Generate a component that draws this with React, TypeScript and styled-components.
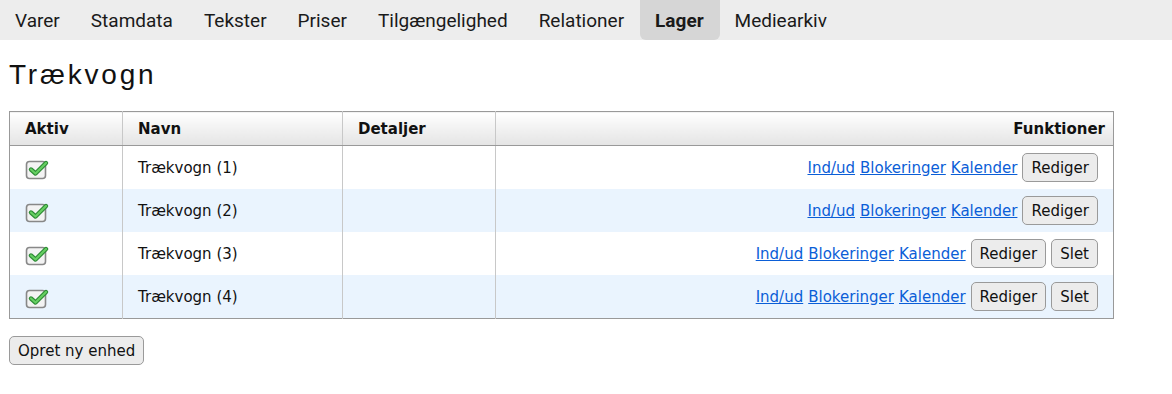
import React from "react";
import styled, { createGlobalStyle } from "styled-components";

const GlobalStyle = createGlobalStyle`
  body {
    margin: 0;
    background: #fff;
    font-family: "DejaVu Sans", Verdana, sans-serif;
  }
`;

const TabBar = styled.div`
  display: flex;
  height: 40px;
  background: #ededed;
  font-family: Roboto, "Liberation Sans", sans-serif;
`;

const Tab = styled.div<{ $active?: boolean }>`
  display: flex;
  align-items: center;
  padding: 0 16px 0 15px;
  font-size: 19px;
  color: #1a1a1a;
  font-weight: ${(p) => (p.$active ? 700 : 400)};
  background: ${(p) => (p.$active ? "#d6d6d6" : "transparent")};
  border-radius: 0 0 6px 6px;
`;

const Content = styled.div`
  padding: 0 9px;
`;

const Title = styled.h1`
  margin: 19px 0 0;
  font-family: "Liberation Sans", Arial, sans-serif;
  font-weight: 400;
  font-size: 28px;
  letter-spacing: 2.8px;
  color: #111;
  line-height: 32px;
`;

const Table = styled.table`
  margin-top: 20px;
  width: 1105px;
  table-layout: fixed;
  border-collapse: collapse;
  border: 1px solid #999;
  font-size: 15px;
  color: #111;
`;

const Col = styled.col<{ $w?: number }>`
  width: ${(p) => (p.$w ? `${p.$w}px` : "auto")};
`;

const Th = styled.th<{ $right?: boolean }>`
  height: 33px;
  padding: 0 8px 0 15px;
  text-align: ${(p) => (p.$right ? "right" : "left")};
  background: linear-gradient(#ffffff, #e4e4e4);
  border-left: 1px solid #c8c8c8;
  border-bottom: 1px solid #999;
  font-weight: 700;
  &:first-child {
    border-left: none;
  }
`;

const Tr = styled.tr<{ $alt?: boolean }>`
  background: ${(p) => (p.$alt ? "#eaf4fe" : "#fff")};
`;

const Td = styled.td<{ $right?: boolean }>`
  height: 43px;
  padding: 0 15px;
  text-align: ${(p) => (p.$right ? "right" : "left")};
  border-left: 1px solid #c8c8c8;
  &:first-child {
    border-left: none;
  }
`;

const Actions = styled.div`
  display: flex;
  justify-content: flex-end;
  align-items: center;
  gap: 5px;
`;

const LinkText = styled.a`
  color: #0b5ed7;
  text-decoration: underline;
  cursor: pointer;
`;

const Button = styled.button`
  font-family: "DejaVu Sans", Verdana, sans-serif;
  font-size: 15px;
  color: #111;
  height: 29px;
  padding: 0 8px;
  background: #ececec;
  border: 1px solid #9a9a9a;
  border-radius: 5px;
`;

const FooterButton = styled(Button)`
  margin-top: 17px;
`;

const CheckIcon = () => (
  <svg width="28" height="22" viewBox="0 0 28 22" style={{ display: "block", marginTop: 4 }}>
    <rect x="1.5" y="2.5" width="19" height="17" rx="3" fill="#f3f3f3" stroke="#888" strokeWidth="1.6" />
    <path d="M6 10.5 L10.5 14.5 L21 4" fill="none" stroke="#2c8a34" strokeWidth="4.4" strokeLinecap="round" strokeLinejoin="round" />
    <path d="M6 10.5 L10.5 14.5 L21 4" fill="none" stroke="#66cf62" strokeWidth="2.2" strokeLinecap="round" strokeLinejoin="round" />
  </svg>
);

const tabs = ["Varer", "Stamdata", "Tekster", "Priser", "Tilgængelighed", "Relationer", "Lager", "Mediearkiv"];

const rows = [
  { name: "Trækvogn (1)", del: false },
  { name: "Trækvogn (2)", del: false },
  { name: "Trækvogn (3)", del: true },
  { name: "Trækvogn (4)", del: true },
];

export default function App() {
  return (
    <>
      <GlobalStyle />
      <TabBar>
        {tabs.map((t) => (
          <Tab key={t} $active={t === "Lager"}>
            {t}
          </Tab>
        ))}
      </TabBar>
      <Content>
        <Title>Trækvogn</Title>
        <Table>
          <colgroup>
            <Col $w={113} />
            <Col $w={220} />
            <Col $w={153} />
            <Col />
          </colgroup>
          <thead>
            <tr>
              <Th>Aktiv</Th>
              <Th>Navn</Th>
              <Th>Detaljer</Th>
              <Th $right>Funktioner</Th>
            </tr>
          </thead>
          <tbody>
            {rows.map((r, i) => (
              <Tr key={r.name} $alt={i % 2 === 1}>
                <Td>
                  <CheckIcon />
                </Td>
                <Td>{r.name}</Td>
                <Td />
                <Td $right>
                  <Actions>
                    <LinkText>Ind/ud</LinkText>
                    <LinkText>Blokeringer</LinkText>
                    <LinkText>Kalender</LinkText>
                    <Button>Rediger</Button>
                    {r.del && <Button>Slet</Button>}
                  </Actions>
                </Td>
              </Tr>
            ))}
          </tbody>
        </Table>
        <FooterButton>Opret ny enhed</FooterButton>
      </Content>
    </>
  );
}
